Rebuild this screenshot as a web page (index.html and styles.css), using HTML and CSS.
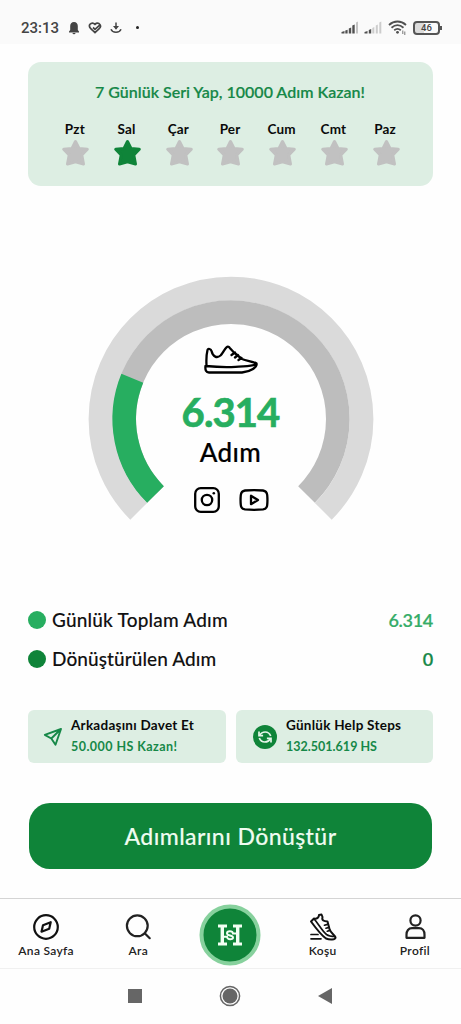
FILE: index.html
```html
<!DOCTYPE html>
<html lang="tr">
<head>
<meta charset="utf-8">
<title>Adım</title>
<link rel="stylesheet" href="styles.css">
</head>
<body>
<div class="phone">
  <header class="status">
    <span class="clock">23:13</span>
    <svg class="s-bell" width="12" height="14" viewBox="0 0 12 14"><path d="M6 1C3.500 1 2.200 3 2.200 5v4L1 10.500V11.500h10v-1L9.800 9V5C9.800 3 8.500 1 6 1zM4.500 12h3a1.500 1.300 0 0 1-3 0z" fill="#444"/></svg>
    <svg class="s-heart" width="14" height="12" viewBox="0 0 14 12"><path d="M5 5.500 7 7.300 12 2.800C10.500.5 8.500.8 7 2.300 5.500.8 3.500.5 2 2.300.8 4 1.500 5.500 3 6.800L7 10.500 11 6.800C12.500 5.500 13 4 12 2.800" fill="none" stroke="#444" stroke-width="1.700"/></svg>
    <svg class="s-down" width="12" height="12" viewBox="0 0 12 12"><path d="M6 .5v6M1 7.200c1.500 4 8.500 4 10 0" fill="none" stroke="#444" stroke-width="1.500"/><path d="M3 4h6L6 7.800z" fill="#444"/></svg>
    <span class="dot"></span>
    <svg class="s-sig" width="18" height="13" viewBox="0 0 18 13"><path d="M.5 12.500v-1.500l3-1v2.500zM4.300 12.500V9.500l2.300-.8v3.800zM7.800 12.500V7.500l2.400-1v6zM11.300 12.500V4.500l2.400-1v9z" fill="#505050"/><path d="M15 12.500V1.500l2-1v12z" fill="#c4c4c4"/></svg>
    <svg class="s-sig2" width="18" height="13" viewBox="0 0 18 13"><path d="M.5 12.500v-1.500l3-1v2.500zM4.800 12.500V9l2.400-1v4.500z" fill="#505050"/><path d="M8.300 12.500V7l2-1v6.500zM11.800 12.500V4.500l2-1v9zM15.300 12.500V1.500l2-1v12z" fill="#ccc"/></svg>
    <svg class="s-wifi" width="19" height="15" viewBox="0 0 19 15"><path d="M1 5c5-4.700 12-4.700 17 0M3.500 7.700c4-3.500 8-3.500 12 0M6.200 10.200c2.400-1.900 4.200-1.900 6.600 0" fill="none" stroke="#505050" stroke-width="1.800"/><circle cx="9.500" cy="12.300" r="1.400" fill="#505050"/><path d="M14.800 10.500v3.500M16.800 11.500v3.500" stroke="#777" stroke-width="1"/></svg>
    <span class="battery"><span>46</span></span>
  </header>

  <main class="content">
    <section class="streak">
      <h1 class="streak-title">7 Günlük Seri Yap, 10000 Adım Kazan!</h1>
      <svg class="defs" width="0" height="0"><defs><path id="star" d="M14 2.500 17.500 9.500 25.800 10.300 20.300 16 22 25 14 22.800 6 25 7.700 16 2.200 10.300 10.500 9.500z" stroke-width="3" stroke-linejoin="round"/></defs></svg>
      <div class="days">
        <div class="day"><span>Pzt</span><svg viewBox="0 0 28 28"><use href="#star"/></svg></div>
        <div class="day done"><span>Sal</span><svg viewBox="0 0 28 28"><use href="#star"/></svg></div>
        <div class="day"><span>Çar</span><svg viewBox="0 0 28 28"><use href="#star"/></svg></div>
        <div class="day"><span>Per</span><svg viewBox="0 0 28 28"><use href="#star"/></svg></div>
        <div class="day"><span>Cum</span><svg viewBox="0 0 28 28"><use href="#star"/></svg></div>
        <div class="day"><span>Cmt</span><svg viewBox="0 0 28 28"><use href="#star"/></svg></div>
        <div class="day"><span>Paz</span><svg viewBox="0 0 28 28"><use href="#star"/></svg></div>
      </div>
    </section>

    <section class="gauge">
      <svg class="ring" width="286" height="286" viewBox="-143 -143 286 286" fill="none">
        <path d="M-92.300 92.300A130.500 130.500 0 1 1 92.300 92.300" stroke="#dadada" stroke-width="23.800"/>
        <path d="M-75.500 75.500A106.800 106.800 0 1 1 75.500 75.500" stroke="#bdbdbd" stroke-width="23.600"/>
        <path d="M-75.500 75.500A106.800 106.800 0 0 1 -98.700 -40.700" stroke="#27ae60" stroke-width="23.600"/>
      </svg>
      <div class="gauge-body">
        <svg class="shoe" width="54" height="30" viewBox="0 0 54 30" fill="none" stroke="#000" stroke-width="2.300" stroke-linejoin="round" stroke-linecap="round"><path d="M2.500 20.500C2.200 15 2.500 9 3.500 5 4 3 7 4 7.500 6 9 12 13 13.500 16.500 10.500 19 8 20.500 4 22.500 2.300 24 1 25 2 26 3.200L30 7.500 38 14C43 16 50 16.500 52.500 18.500 53.500 22 47 26.500 38 27.500H5C2 27.500 1 25 1.500 21c11 1 19 1.500 30 .8C41 21 47 22 52 19M31 7.500l-3.500 2.500M34 10l-3 2.500M37.500 13l-3 2"/></svg>
        <strong class="steps">6.314</strong>
        <span class="unit">Adım</span>
        <div class="social">
          <svg width="28" height="28" viewBox="0 0 28 28" fill="none" stroke="#000" stroke-width="2.300"><rect x="2.200" y="2.200" width="23.600" height="23.600" rx="5.500"/><circle cx="14" cy="14" r="5.200"/><circle cx="20.800" cy="7.300" r="1.300" fill="#000" stroke="none"/></svg>
          <svg width="30" height="28" viewBox="0 0 30 28" fill="none" stroke="#000" stroke-width="2.300" stroke-linejoin="round"><path d="M6 4.500Q15 3.700 24 4.500C27 5 28 7 28.200 9q.5 5 0 10C28 21.500 27 23 24 23.400q-9 .8-18 0C3 23 2 21.500 1.800 19q-.5-5 0-10C2 7 3 5 6 4.500z"/><path d="M12 9.800v8.400l7-4.200z"/></svg>
        </div>
      </div>
    </section>

    <section class="legend">
      <div class="row"><i class="bullet light"></i><span class="l1">Günlük Toplam Adım</span><b class="value light-text">6.314</b></div>
      <div class="row"><i class="bullet"></i><span class="l2">Dönüştürülen Adım</span><b class="value">0</b></div>
    </section>

    <section class="tiles">
      <div class="tile invite">
        <svg width="20" height="20" viewBox="0 0 20 20" fill="none" stroke="#168848" stroke-width="1.900" stroke-linejoin="round"><path d="M18 2 1.800 7.800 8.300 11.500 12.500 17.800zM18 2 8.300 11.500"/></svg>
        <div><b class="t1">Arkadaşını Davet Et</b><b class="sub t2">50.000 HS Kazan!</b></div>
      </div>
      <div class="tile total">
        <svg width="24" height="24" viewBox="0 0 24 24" fill="none"><circle cx="12" cy="12" r="12" fill="#0f8439"/><g stroke="#e6f6ea" stroke-width="1.700"><path d="M6.500 10.500C9 6 15.500 5.500 17.700 11M6.300 13C8.500 18.500 15 18 17.500 13.500"/><path d="M6 6.500v4.100h4.100M18 17.500v-4.100h-4.100"/></g></svg>
        <div><b class="t3">Günlük Help Steps</b><b class="sub t4">132.501.619 HS</b></div>
      </div>
    </section>

    <button class="convert"><span>Adımlarını Dönüştür</span></button>
  </main>

  <nav class="tabs">
    <a class="tab"><svg width="28" height="28" viewBox="0 0 28 28" fill="none" stroke="#111" stroke-width="2.200" stroke-linejoin="round"><circle cx="14" cy="14" r="11.800"/><path d="M9.500 18.700 11 12.200 18.700 9.200 17.200 15.700z"/></svg><span class="n1">Ana Sayfa</span></a>
    <a class="tab"><svg width="28" height="28" viewBox="0 0 28 28" fill="none" stroke="#222" stroke-width="2.200" stroke-linecap="round"><circle cx="13.300" cy="12.800" r="10.400"/><path d="m20.700 20.200 5 5"/></svg><span class="n2">Ara</span></a>
    <a class="hub"><svg width="62" height="62" viewBox="0 0 62 62" fill="none"><circle cx="31" cy="31" r="28.500" fill="#0f8439" stroke="#87d19d" stroke-width="4"/><path d="M19 22h9M19 40h9M34 22h9M34 40h9" stroke="#f3fff4" stroke-width="2.800"/><path d="M23.300 22v18M38.700 22v18" stroke="#f3fff4" stroke-width="3.400"/><path d="M38.500 29.500H34C33.500 26.500 28 26.800 28 29.300c0 3 6 1.500 6 4.400 0 2.300-5.500 2.300-6-.9H23.500" stroke="#f3fff4" stroke-width="2"/></svg></a>
    <a class="tab"><svg width="28" height="28" viewBox="0 0 28 28" fill="none" stroke="#111" stroke-width="2" stroke-linejoin="round" stroke-linecap="round"><path d="M2 8.500 5 5.500C8 6.500 10 4 10 2L12.500 1.500 13.500 4C12.500 7.500 15 8.500 18.500 8.500L20.500 16C21.500 20 26 22 26.500 24.500 26.500 27 20.500 27 17 25.500 12 22 6 14 2 8.500z"/><path d="M5 6C9 10 13 18 17.500 21.500 20 23.300 23 23.500 26 23.500M15.500 12.200l3-.8M17 15.200l3-.8M18.300 18.200l2.500-.8" stroke-width="1.700"/><path d="M2 21.500h7M2 25.800h10" stroke-width="1.700"/></svg><span class="n3">Koşu</span></a>
    <a class="tab"><svg width="28" height="28" viewBox="0 0 28 28" fill="none" stroke="#222" stroke-width="2.200" stroke-linejoin="round"><circle cx="14.500" cy="7.500" r="5.100"/><path d="M5.500 24.800V21.500C5.500 18 7.500 15.200 11 15.200h7c3.500 0 5.500 2.800 5.500 6.300v3.300z"/></svg><span class="n4">Profil</span></a>
  </nav>

  <footer class="system">
    <svg width="14" height="14"><rect width="14" height="14" fill="#666"/></svg>
    <svg width="22" height="22" viewBox="0 0 22 22"><circle cx="11" cy="11" r="9.600" fill="none" stroke="#666" stroke-width="1.500"/><circle cx="11" cy="11" r="7.500" fill="#666"/></svg>
    <svg width="14" height="16"><path d="M14 0v16L0 8z" fill="#666"/></svg>
  </footer>
</div>
</body>
</html>
```
FILE: styles.css
```css
* { box-sizing: border-box; }
body { margin: 0; background: #fefefe; font-family: Lato, "Noto Sans", sans-serif; color: #111; }
svg { display: block; flex: none; }
.phone { width: 461px; height: 1024px; display: flex; flex-direction: column; overflow: hidden; }
.status { height: 44px; flex: none; background: #fafafa; display: flex; align-items: center; padding: 11px 19px 0 21px; color: #444; }
.clock { font: 500 15px/20px Roboto, sans-serif; width: 39px; white-space: nowrap; }
.s-bell { margin-left: 8px; }
.s-heart { margin-left: 8px; }
.s-down { margin-left: 8px; }
.dot { width: 3px; height: 3px; border-radius: 50%; background: #222; margin: 0 auto 0 14px; }
.s-sig2 { margin-left: 5px; }
.s-wifi { margin-left: 6px; }
.battery { position: relative; width: 27px; height: 14px; margin: 0 2px 0 6px; border: 2px solid #555; border-radius: 4px; font: 500 9.500px/10px Roboto, sans-serif; text-align: center; background: linear-gradient(90deg, #dcdcdc 40%, transparent 40%); }
.battery::after { content: ""; position: absolute; right: -4px; top: 3px; width: 2px; height: 4px; background: #555; }

.content { padding: 18px 28px 0; flex: none; height: 854px; display: flex; flex-direction: column; }
.streak { height: 124px; border-radius: 13px; background: #ddeee3; padding: 20px 22px 0 21px; }
.streak-title { margin: 0; font-size: 16px; line-height: 20px; font-weight: 600; color: #168848; text-align: center; white-space: nowrap; -webkit-text-stroke: .15px; }
.defs { position: absolute; }
.days { display: grid; grid-template-columns: repeat(7, 1fr); margin-top: 18px; }
.day { display: flex; flex-direction: column; align-items: center; font-size: 13.500px; line-height: 18px; font-weight: 700; color: #0a0a0a; letter-spacing: .15px; }
.day svg { width: 29px; height: 28px; margin: 1px 0 0 2px; fill: #c1c1c1; stroke: #c1c1c1; }
.day.done svg { fill: #0f8439; stroke: #0f8439; }

.gauge { display: grid; width: 286px; height: 286px; margin: 90px auto 0; }
.ring, .gauge-body { grid-area: 1 / 1; }
.gauge-body { display: flex; flex-direction: column; align-items: center; padding-top: 69px; }
.steps { font-size: 40px; line-height: 48px; margin-top: 13px; color: #27ae60; font-weight: 700; letter-spacing: -.9px; -webkit-text-stroke: .7px; }
.unit { font-size: 26px; line-height: 32px; font-weight: 500; color: #000; letter-spacing: .4px; -webkit-text-stroke: .2px; }
.social { display: flex; gap: 18px; margin-top: 18px; }

.legend { margin-top: 46px; display: flex; flex-direction: column; gap: 15px; }
.row { display: flex; align-items: center; height: 24px; font-size: 19px; line-height: 24px; font-weight: 500; white-space: nowrap; }
.row span { -webkit-text-stroke: .1px; }
.l1 { letter-spacing: .2px; }
.l2 { letter-spacing: .08px; }
.bullet { width: 18px; height: 18px; border-radius: 50%; background: #0f8439; margin-right: 6px; }
.bullet.light { background: #27ae60; }
.value { margin-left: auto; font-size: 18px; font-weight: 600; color: #168848; letter-spacing: -.3px; -webkit-text-stroke: .2px; }
.value.light-text { color: #35ac68; }

.tiles { display: grid; grid-template-columns: 198px 197px; gap: 10px; margin-top: 39px; }
.tile { height: 53px; border-radius: 6px; background: #ddeee3; display: flex; align-items: center; }
.invite { padding-left: 15px; gap: 8px; }
.total { padding-left: 17px; gap: 9px; }
.tile b { display: block; font-size: 13.500px; line-height: 22px; font-weight: 700; color: #0a0a0a; white-space: nowrap; letter-spacing: .25px; }
.tile .sub { color: #168848; font-size: 12.500px; letter-spacing: .45px; }
.tile .t4 { letter-spacing: .02px; }
.tile .t1, .tile .t3 { line-height: 21px; }
.convert { margin: 40px 1px 0; height: 66px; border: 0; border-radius: 21px; background: #0f8439; color: #effcf0; font: 500 23px/30px Lato, sans-serif; letter-spacing: .42px; white-space: nowrap; -webkit-text-stroke: .1px; }

.tabs { height: 71px; border-top: 1px solid #d4d4d4; border-bottom: 1px solid #f0f0f0; display: grid; grid-template-columns: repeat(5, 1fr); flex: none; }
.tab { display: flex; flex-direction: column; align-items: center; padding-top: 14px; font-size: 12px; line-height: 19px; font-weight: 600; color: #222; letter-spacing: .3px; }
.hub { display: flex; justify-content: center; padding-top: 5px; }
.system { flex: 1; display: flex; align-items: center; justify-content: center; gap: 77px; padding: 0 1px 1px 0; }
```
